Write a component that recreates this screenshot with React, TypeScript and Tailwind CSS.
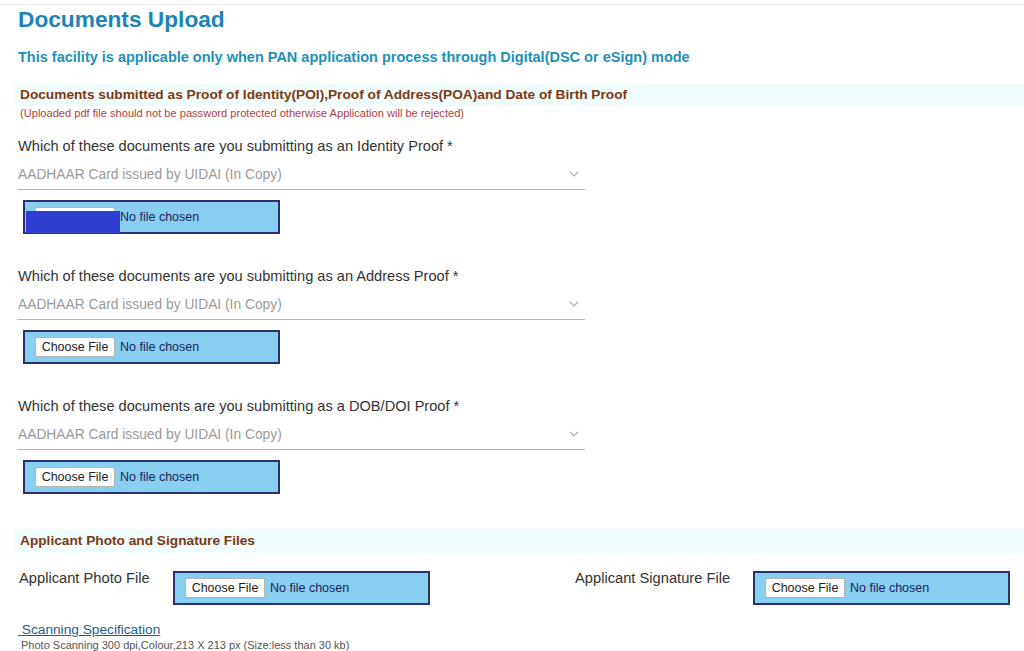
import React from "react";

function FileBox({ redacted = false, className = "" }: { redacted?: boolean; className?: string }) {
  return (
    <div
      className={
        "relative flex h-[34px] w-[257px] items-center border-2 border-[#2c3070] bg-[#88cef0] pl-[10px] " +
        className
      }
    >
      <div className="flex h-[20px] w-[80px] items-center justify-center rounded-[2px] border border-[#b5b5b5] bg-white text-[12.5px] text-[#222]">
        Choose File
      </div>
      <span className="ml-[5px] text-[12.5px] text-[#1c1f5a]">No file chosen</span>
      {redacted && (
        <div className="absolute left-[1px] top-[9px] h-[22px] w-[94px] bg-[#2f3dd0]" />
      )}
    </div>
  );
}

function ProofGroup({ label, redacted = false, first = false }: { label: string; redacted?: boolean; first?: boolean }) {
  return (
    <div className={first ? "mt-[16px]" : "mt-[32px]"}>
      <div className="ml-[18px] text-[14.6px] leading-[20px] text-[#333]">{label}</div>
      <div className="ml-[17px] mt-[5px] flex h-[29px] w-[568px] items-center justify-between border-b border-[#a4bcc4] pl-[1px] pr-[6px]">
        <span className="text-[13.8px] text-[#9a9a9a]">AADHAAR Card issued by UIDAI (In Copy)</span>
        <svg width="10" height="6" viewBox="0 0 10 6" className="mb-[2px]">
          <path d="M1 1 L5 5 L9 1" fill="none" stroke="#b0b0b0" strokeWidth="1.2" />
        </svg>
      </div>
      <FileBox redacted={redacted} className="ml-[23px] mt-[10px]" />
    </div>
  );
}

export default function App() {
  return (
    <div
      className="h-[651px] w-[1024px] overflow-hidden bg-white"
      style={{ fontFamily: '"Liberation Sans", Arial, sans-serif' }}
    >
      <div className="h-[4px]" />
      <div className="border-t border-[#ececec]">
        <h1 className="ml-[18px] text-[22.7px] font-bold leading-[28px] text-[#1d84b6]">Documents Upload</h1>
        <div className="ml-[18px] mt-[14px] text-[14.5px] font-bold leading-[20px] text-[#2290b6]">
          This facility is applicable only when PAN application process through Digital(DSC or eSign) mode
        </div>
        <div className="ml-[14px] mt-[17px] flex h-[22px] items-center bg-[#f1fcfd] pl-[6px] text-[13.7px] font-bold text-[#7b3a14]">
          Documents submitted as Proof of Identity(POI),Proof of Address(POA)and Date of Birth Proof
        </div>
        <div className="ml-[20px] text-[11.1px] leading-[14px] text-[#b04242]">
          (Uploaded pdf file should not be password protected otherwise Application will be rejected)
        </div>

        <ProofGroup first redacted label="Which of these documents are you submitting as an Identity Proof *" />
        <ProofGroup label="Which of these documents are you submitting as an Address Proof *" />
        <ProofGroup label="Which of these documents are you submitting as a DOB/DOI Proof *" />

        <div className="ml-[14px] mt-[35px] flex h-[24px] items-center bg-[#f1fcfd] pl-[6px] text-[13.7px] font-bold text-[#7b3a14]">
          Applicant Photo and Signature Files
        </div>

        <div className="mt-[15px] flex items-start">
          <div className="flex w-[575px] items-start pl-[19px]">
            <div className="w-[154px] text-[14.7px] leading-[20px] text-[#333]">Applicant Photo File</div>
            <FileBox className="mt-[3px]" />
          </div>
          <div className="flex items-start">
            <div className="w-[178px] text-[14.7px] leading-[20px] text-[#333]">Applicant Signature File</div>
            <FileBox className="mt-[3px]" />
          </div>
        </div>

        <div className="ml-[18px] mt-[16px] text-[13.7px] leading-[18px] text-[#25608c] underline">
          {"\u00a0"}Scanning Specification
        </div>
        <div className="ml-[21px] text-[11px] leading-[12px] text-[#555]">
          Photo Scanning 300 dpi,Colour,213 X 213 px (Size:less than 30 kb)
        </div>
      </div>
    </div>
  );
}
